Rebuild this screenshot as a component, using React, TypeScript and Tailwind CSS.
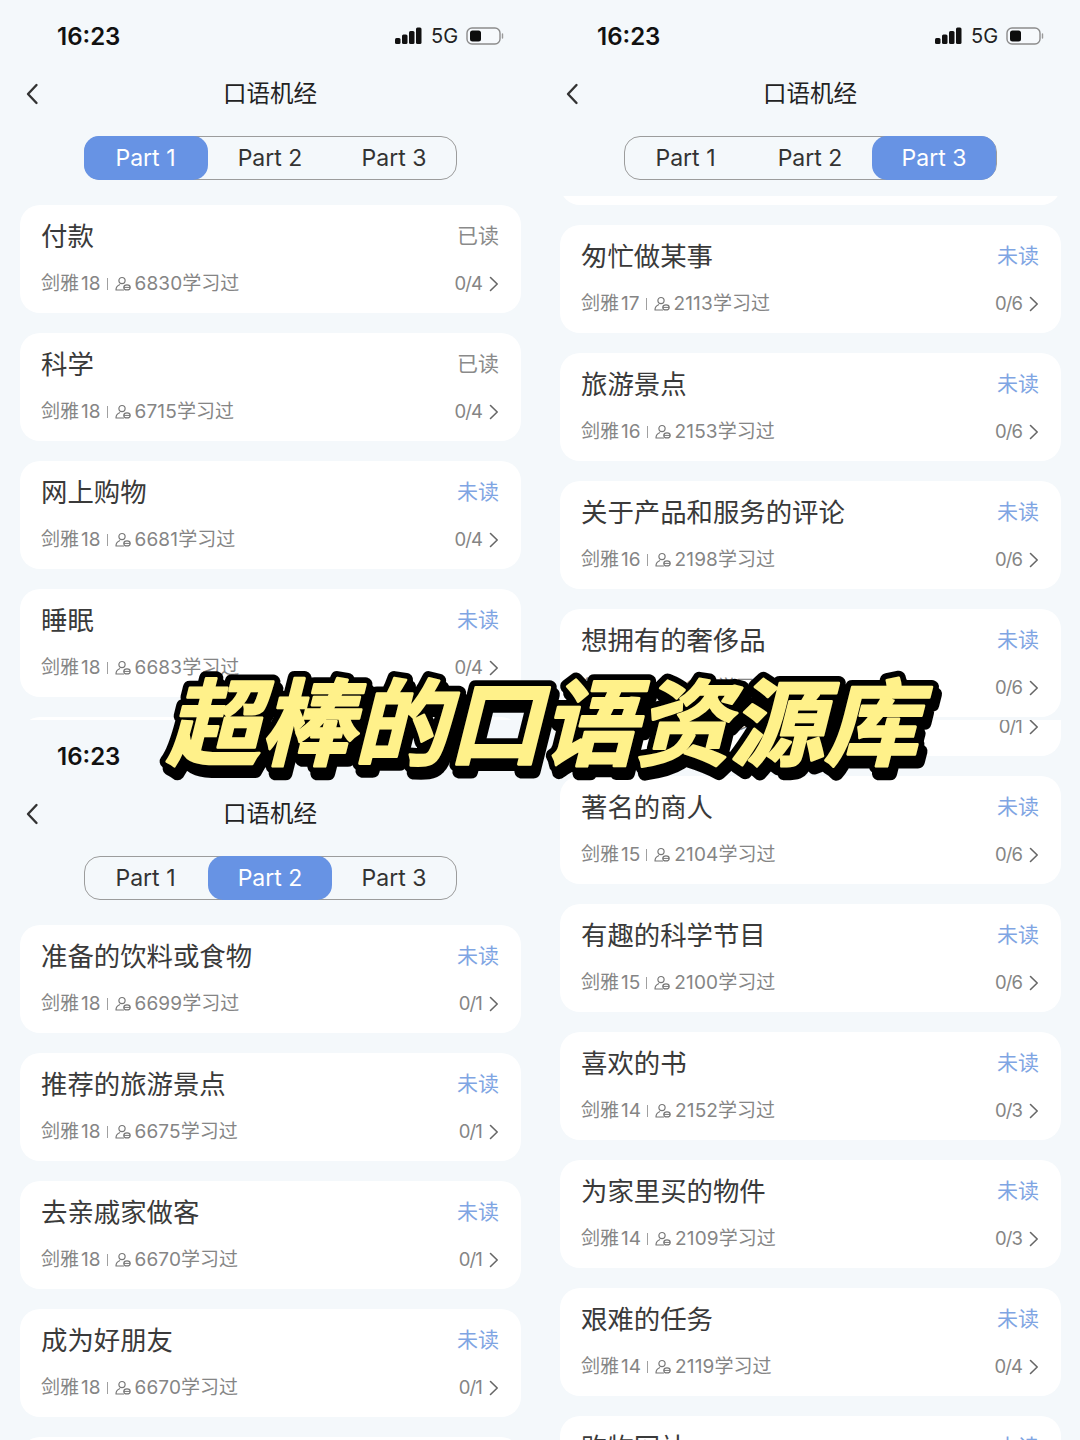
const FONT = "[font-family:Inter,'Noto_Sans_CJK_SC',sans-serif]";

type Item = { t: string; e: number; n: number; p: string; r?: boolean };

const a1: Item[] = [
  { t: "付款", e: 18, n: 6830, p: "0/4", r: true },
  { t: "科学", e: 18, n: 6715, p: "0/4", r: true },
  { t: "网上购物", e: 18, n: 6681, p: "0/4" },
  { t: "睡眠", e: 18, n: 6683, p: "0/4" },
  { t: "自然", e: 18, n: 6680, p: "0/4" },
];
const a2: Item[] = [
  { t: "准备的饮料或食物", e: 18, n: 6699, p: "0/1" },
  { t: "推荐的旅游景点", e: 18, n: 6675, p: "0/1" },
  { t: "去亲戚家做客", e: 18, n: 6670, p: "0/1" },
  { t: "成为好朋友", e: 18, n: 6670, p: "0/1" },
  { t: "感谢的人", e: 18, n: 6668, p: "0/1" },
];
const b1: Item[] = [
  { t: "常用的应用", e: 17, n: 2120, p: "0/6" },
  { t: "匆忙做某事", e: 17, n: 2113, p: "0/6" },
  { t: "旅游景点", e: 16, n: 2153, p: "0/6" },
  { t: "关于产品和服务的评论", e: 16, n: 2198, p: "0/6" },
  { t: "想拥有的奢侈品", e: 16, n: 2127, p: "0/6" },
];
const b2: Item[] = [
  { t: "城市的变化", e: 15, n: 2110, p: "0/1" },
  { t: "著名的商人", e: 15, n: 2104, p: "0/6" },
  { t: "有趣的科学节目", e: 15, n: 2100, p: "0/6" },
  { t: "喜欢的书", e: 14, n: 2152, p: "0/3" },
  { t: "为家里买的物件", e: 14, n: 2109, p: "0/3" },
  { t: "艰难的任务", e: 14, n: 2119, p: "0/4" },
  { t: "购物网站", e: 14, n: 2125, p: "0/4" },
];

function Chevron() {
  return (
    <svg width="10" height="16" viewBox="0 0 10 16" fill="none" className="ml-[7px]">
      <path d="M1.5 1.5 8.2 8l-6.7 6.5" stroke="#666" strokeWidth="1.6" strokeLinecap="round" strokeLinejoin="round" />
    </svg>
  );
}

function Person() {
  return (
    <svg width="16" height="16" viewBox="0 0 16 16" fill="none" className="ml-px mr-[4px]">
      <circle cx="7" cy="4.6" r="3.1" stroke="#777" strokeWidth="1.2" />
      <path d="M1 14c0-2.8 1.6-4.6 3.6-5.3M8.6 14H1" stroke="#777" strokeWidth="1.2" strokeLinecap="round" />
      <ellipse cx="12" cy="11.4" rx="3.2" ry="2.5" stroke="#777" strokeWidth="1.2" />
      <path d="M8.8 11.4h6.2" stroke="#777" strokeWidth="1" />
    </svg>
  );
}

function Card({ item, className = "" }: { item: Item; className?: string }) {
  return (
    <div className={`ml-5 flex h-[108px] w-[501px] shrink-0 flex-col rounded-[20px] bg-white pl-[21px] pr-[22px] pt-[11px]`.concat(" ", className)}>
      <div className="flex h-10 items-center justify-between">
        <span className="text-[26.4px] leading-10 text-[#3a3a3a]">{item.t}</span>
        <span className={`text-[21px] leading-10 ${item.r ? "text-[#8a8a8a]" : "text-[#7fa5e3]"}`}>{item.r ? "已读" : "未读"}</span>
      </div>
      <div className="mt-[14px] flex h-7 items-center justify-between text-[19px] text-[#858585]">
        <div className="flex items-center">
          <span>剑雅</span>
          <span className="ml-[2px]">{item.e}</span>
          <span className="mx-[6px] h-[12px] w-px bg-[#a0a0a0]" />
          <Person />
          <span className="[letter-spacing:0.15px]">{item.n}</span>
          <span>学习过</span>
        </div>
        <div className="flex items-center">
          <span className="text-[18.5px] [letter-spacing:-0.9px]">{item.p}</span>
          <Chevron />
        </div>
      </div>
    </div>
  );
}

function StatusBar({ right = true }: { right?: boolean }) {
  return (
    <div className="flex h-[72px] shrink-0 items-center justify-between pl-[57px] pr-[35px]">
      <span className="pt-[2px] text-[24px] font-semibold text-[#111]">16:23</span>
      {right && (
        <div className="flex items-center">
          <svg width="28" height="18" viewBox="0 0 28 18" fill="#111">
            <rect x="0" y="11" width="5.5" height="6" rx="1.5" />
            <rect x="7" y="7.5" width="5.5" height="9.5" rx="1.5" />
            <rect x="14" y="4" width="5.5" height="13" rx="1.5" />
            <rect x="21" y="0.5" width="5.5" height="16.5" rx="1.5" />
          </svg>
          <span className="ml-[8px] w-[27px] text-[20px] leading-none text-[#222]">5G</span>
          <svg width="39" height="18" viewBox="0 0 39 18" fill="none" className="ml-[8px]">
            <rect x="1" y="1" width="33" height="16" rx="5" stroke="#8c8c8c" strokeWidth="1.4" fill="#f6f9fc" />
            <rect x="4" y="3.5" width="11" height="11" rx="2.5" fill="#0c0c0c" />
            <path d="M36.5 7v4" stroke="#9a9a9a" strokeWidth="1.4" strokeLinecap="round" />
          </svg>
        </div>
      )}
    </div>
  );
}

function Header({ active }: { active: number }) {
  return (
    <>
      <div className="relative flex h-11 shrink-0 items-center justify-center">
        <svg width="14" height="22" viewBox="0 0 14 22" fill="none" className="absolute left-[26px] top-[11px]">
          <path d="M10.5 2 2 11l8.5 9" stroke="#333" strokeWidth="2.4" strokeLinecap="round" strokeLinejoin="round" />
        </svg>
        <span className="text-[23.5px] text-[#222]">口语机经</span>
      </div>
      <div className="ml-[84px] mt-5 flex h-[44px] w-[373px] shrink-0 rounded-[16px] border-[1.5px] border-[#9c9c9c]">
        {[0, 1, 2].map((i) => (
          <div
            key={i}
            className={`-my-[1.5px] flex h-[44px] w-[124px] shrink-0 items-center justify-center pt-px text-[23px] ${i === 0 ? "-ml-[1.5px]" : "pl-px"} ${
              i === active ? "rounded-[15px] bg-[#6793e4] text-white" : "text-[#333]"
            }`}
          >
            Part {i + 1}
          </div>
        ))}
      </div>
    </>
  );
}

function Panel({ children }: { children: React.ReactNode }) {
  return <section className="flex h-[720px] w-[540px] flex-col overflow-hidden">{children}</section>;
}

function Banner() {
  const text = "超棒的口语资源库";
  const common = {
    x: 166,
    y: 108,
    fontSize: 94,
    fontWeight: 700,
    fontStyle: "italic",
    fontFamily: "'Noto Sans CJK SC', sans-serif",
    strokeLinejoin: "round" as const,
  };
  return (
    <svg width="1080" height="160" viewBox="0 0 1080 160" className="absolute left-0 top-[650px]">
      <text {...common} dx="3" dy="7" fill="#000" stroke="#000" strokeWidth="14" aria-hidden>
        {text}
      </text>
      <text {...common} fill="#000" stroke="#000" strokeWidth="14" aria-hidden>
        {text}
      </text>
      <text {...common} fill="#fff18a" stroke="#fff18a" strokeWidth="2.5">
        {text}
      </text>
    </svg>
  );
}

export default function App() {
  return (
    <div className={`relative grid h-[1440px] w-[1080px] grid-cols-2 overflow-hidden bg-[#f4f8fb] ${FONT}`}>
      <div className="flex flex-col">
        <Panel>
          <StatusBar />
          <Header active={0} />
          <div className="mt-[25px] flex min-h-0 flex-1 flex-col gap-5 overflow-hidden">
            {a1.map((x) => (
              <Card key={x.t} item={x} />
            ))}
          </div>
        </Panel>
        <Panel>
          <StatusBar right={false} />
          <Header active={1} />
          <div className="mt-[25px] flex min-h-0 flex-1 flex-col gap-5 overflow-hidden">
            {a2.map((x) => (
              <Card key={x.t} item={x} />
            ))}
          </div>
        </Panel>
      </div>
      <div className="flex flex-col">
        <Panel>
          <StatusBar />
          <Header active={2} />
          <div className="mt-4 flex min-h-0 flex-1 flex-col gap-5 overflow-hidden">
            {b1.map((x, i) => (
              <Card key={x.t} item={x} className={i === 0 ? "-mt-[99px]" : ""} />
            ))}
          </div>
        </Panel>
        <Panel>
          <div className="flex min-h-0 flex-1 flex-col gap-5 overflow-hidden">
            {b2.map((x, i) => (
              <Card key={x.t} item={x} className={i === 0 ? "-mt-[72px]" : ""} />
            ))}
          </div>
        </Panel>
      </div>
      <Banner />
    </div>
  );
}
